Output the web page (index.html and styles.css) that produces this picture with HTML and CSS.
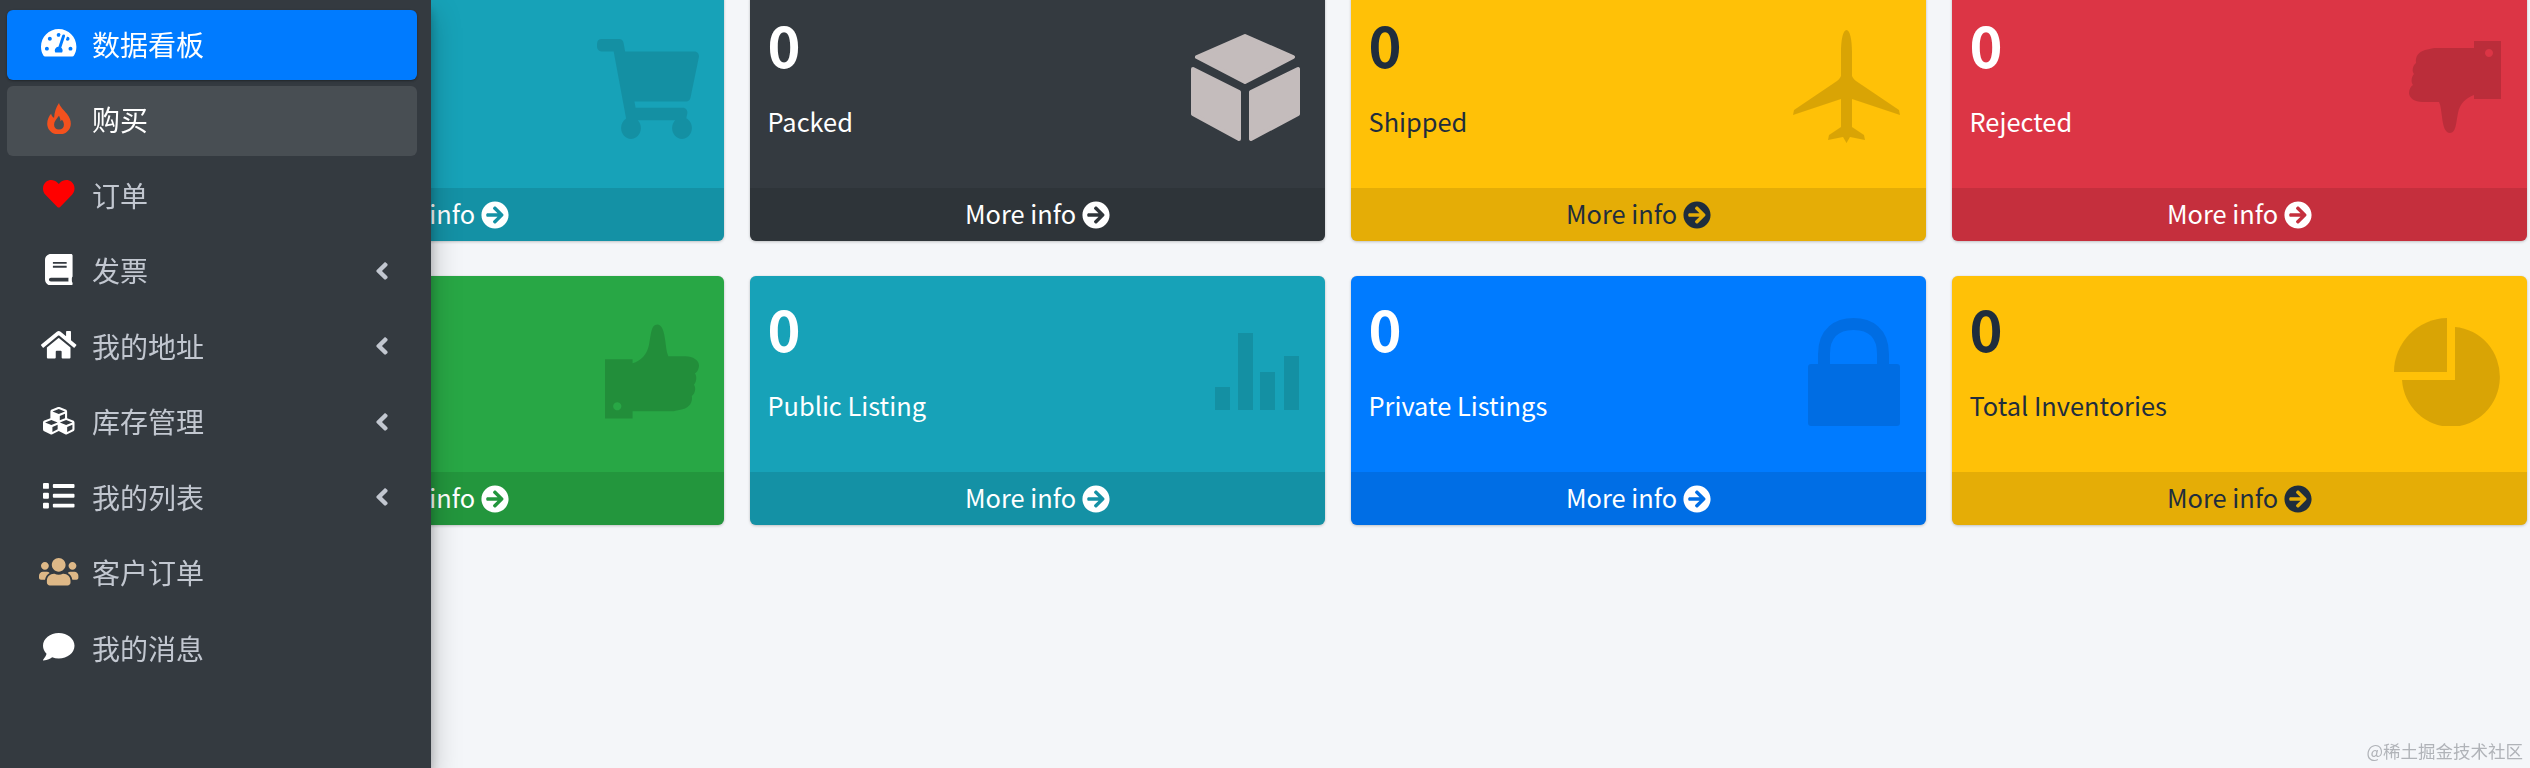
FILE: index.html
```html
<!DOCTYPE html>
<html lang="zh-CN">
<head>
<meta charset="utf-8">
<title>数据看板</title>
<link rel="stylesheet" href="styles.css">
</head>
<body>
<svg class="defs" aria-hidden="true">
  <symbol id="arrow" viewBox="0 0 512 512"><path d="M256 8c137 0 248 111 248 248S393 504 256 504 8 393 8 256 119 8 256 8zm-28.9 143.6l75.5 72.4H120c-13.3 0-24 10.7-24 24v16c0 13.3 10.7 24 24 24h182.6l-75.5 72.4c-9.7 9.3-9.9 24.8-.4 34.3l11 10.9c9.4 9.4 24.6 9.4 33.9 0L404.3 273c9.4-9.4 9.4-24.6 0-33.9L271.6 106.3c-9.4-9.4-24.6-9.4-33.9 0l-11 10.9c-9.5 9.6-9.3 25.1.4 34.4z"/></symbol>
  <symbol id="angle" viewBox="0 0 256 512"><path d="M31.7 239l136-136c9.4-9.4 24.6-9.4 33.9 0l22.6 22.6c9.4 9.4 9.4 24.6 0 33.9L127.9 256l96.4 96.4c9.4 9.4 9.4 24.6 0 33.9L201.7 409c-9.4 9.4-24.6 9.4-33.9 0l-136-136c-9.5-9.4-9.5-24.6-.1-34z"/></symbol>
  <symbol id="thumb" viewBox="0 0 92 92"><path fill-rule="evenodd" d="M65 0H92V58H65V54C57 57 51 62 49 72 47 82 47 92 41 92 36 92 34 85 33 76 32 70 32 65 30 61H13C6 61 0 57 0 52 0 48 2 45 4 44 2 42 2 36 5 33 3 31 3 25 7 22 6 16 9 11 16 9L25 7H65ZM80 8a4 4 0 1 0 .01 0Z"/></symbol>
</svg>

<aside class="sidebar">
  <nav class="nav">
    <a class="nav-link active"><span class="nav-ico"><svg class="ic w576" viewBox="0 0 576 512"><path d="M288 32C128.94 32 0 160.94 0 320c0 52.8 14.25 102.26 39.06 144.8 5.61 9.62 16.3 15.2 27.44 15.2h443c11.14 0 21.83-5.58 27.44-15.2C561.75 422.26 576 372.8 576 320c0-159.06-128.94-288-288-288zm0 64c14.71 0 26.58 10.13 30.32 23.65-1.11 2.26-2.64 4.23-3.45 6.67l-9.22 27.67c-5.13 3.49-10.97 6.01-17.64 6.01-17.67 0-32-14.33-32-32S270.33 96 288 96zM96 384c-17.67 0-32-14.33-32-32s14.33-32 32-32 32 14.33 32 32-14.33 32-32 32zm48-160c-17.67 0-32-14.33-32-32s14.33-32 32-32 32 14.33 32 32-14.33 32-32 32zm246.77-72.41l-61.33 184C343.13 347.33 352 364.54 352 384c0 11.72-3.38 22.55-8.88 32H232.88c-5.5-9.45-8.88-20.28-8.88-32 0-33.94 26.5-61.43 59.9-63.59l61.34-184.01c4.17-12.56 17.73-19.45 30.36-15.17 12.57 4.19 19.35 17.79 15.17 30.36zm14.66 57.2l15.52-46.55c3.47-1.29 7.13-2.23 11.05-2.23 17.67 0 32 14.33 32 32s-14.33 32-32 32c-11.38-.01-20.89-6.28-26.57-15.22zM480 384c-17.67 0-32-14.33-32-32s14.33-32 32-32 32 14.33 32 32-14.33 32-32 32z"/></svg></span><span class="nav-text">数据看板</span></a>
    <a class="nav-link hover"><span class="nav-ico"><svg class="ic wfire fire" viewBox="0 0 24 32"><path fill-rule="evenodd" d="M12 0C13 4 17 7 20 11 23 15 24 18 24 21 24 27.5 18.5 32 12 32 5.5 32 0 27.5 0 21 0 17 2 13 4 11 4.5 13 5.5 14.5 7 15 7.5 9 9 4 12 0ZM12 13C9.5 16.5 7 18.5 7 22 7 25 9 27 12 27 15 27 17 25 17 22 17 20 16 18 15 17L13.5 18.5C13.5 16.5 13 15 12 13Z"/></svg></span><span class="nav-text">购买</span></a>
    <a class="nav-link"><span class="nav-ico"><svg class="ic w512 heart" viewBox="0 0 512 512"><path d="M462.3 62.6C407.5 15.9 326 24.3 275.7 76.2L256 96.5l-19.7-20.3C186.1 24.3 104.5 15.9 49.7 62.6c-62.8 53.6-66.1 149.8-9.9 207.9l193.5 199.8c12.5 12.9 32.8 12.9 45.3 0l193.5-199.8c56.3-58.1 53-154.3-9.8-207.9z"/></svg></span><span class="nav-text">订单</span></a>
    <a class="nav-link"><span class="nav-ico"><svg class="ic w448" viewBox="0 0 448 512"><path d="M448 360V24c0-13.3-10.7-24-24-24H96C43 0 0 43 0 96v320c0 53 43 96 96 96h328c13.3 0 24-10.7 24-24v-16c0-7.5-3.5-14.3-8.9-18.7-4.2-15.4-4.2-59.3 0-74.7 5.4-4.3 8.9-11.1 8.9-18.6zM128 134c0-3.3 2.7-6 6-6h212c3.3 0 6 2.7 6 6v20c0 3.3-2.7 6-6 6H134c-3.3 0-6-2.7-6-6v-20zm0 64c0-3.3 2.7-6 6-6h212c3.3 0 6 2.7 6 6v20c0 3.3-2.7 6-6 6H134c-3.3 0-6-2.7-6-6v-20zm253.4 250H96c-17.7 0-32-14.3-32-32 0-17.6 14.4-32 32-32h285.4c-1.9 17.1-1.9 46.9 0 64z"/></svg></span><span class="nav-text">发票</span><svg class="chev"><use href="#angle"/></svg></a>
    <a class="nav-link"><span class="nav-ico"><svg class="ic w576" viewBox="0 0 576 512"><path d="M280.37 148.26L96 300.11V464a16 16 0 0 0 16 16l112.06-.29a16 16 0 0 0 15.92-16V368a16 16 0 0 1 16-16h64a16 16 0 0 1 16 16v95.64a16 16 0 0 0 16 16.05L464 480a16 16 0 0 0 16-16V300L295.67 148.26a12.19 12.19 0 0 0-15.3 0zM571.6 251.47L488 182.56V44.05a12 12 0 0 0-12-12h-56a12 12 0 0 0-12 12v72.61L318.47 43a48 48 0 0 0-61 0L4.34 251.47a12 12 0 0 0-1.6 16.9l25.5 31A12 12 0 0 0 45.15 301l235.22-193.74a12.19 12.19 0 0 1 15.3 0L530.9 301a12 12 0 0 0 16.9-1.6l25.5-31a12 12 0 0 0-1.7-16.93z"/></svg></span><span class="nav-text">我的地址</span><svg class="chev"><use href="#angle"/></svg></a>
    <a class="nav-link"><span class="nav-ico"><svg class="ic w512" viewBox="0 0 512 512"><path d="M488.6 250.2L392 214V105.5c0-15-9.3-28.4-23.4-33.7l-100-37.5c-8.1-3.1-17.1-3.1-25.3 0l-100 37.5c-14.1 5.3-23.4 18.7-23.4 33.7V214l-96.6 36.2C9.3 255.5 0 268.9 0 283.9V394c0 13.6 7.7 26.1 19.9 32.2l100 50c10.1 5.1 22.1 5.1 32.2 0l103.9-52 103.9 52c10.1 5.1 22.1 5.1 32.2 0l100-50c12.2-6.1 19.9-18.6 19.9-32.2V283.9c0-15-9.3-28.4-23.4-33.7zM358 214.8l-85 31.9v-68.2l85-37v73.3zM154 104.1l102-38.2 102 38.2v.6l-102 41.4-102-41.4v-.6zm84 291.1l-85 42.5v-79.1l85-38.8v75.4zm0-112l-102 41.4-102-41.4v-.6l102-38.2 102 38.2v.6zm240 112l-85 42.5v-79.1l85-38.8v75.4zm0-112l-102 41.4-102-41.4v-.6l102-38.2 102 38.2v.6z"/></svg></span><span class="nav-text">库存管理</span><svg class="chev"><use href="#angle"/></svg></a>
    <a class="nav-link"><span class="nav-ico"><svg class="ic w512" viewBox="0 0 512 512"><path d="M80 368H16a16 16 0 0 0-16 16v64a16 16 0 0 0 16 16h64a16 16 0 0 0 16-16v-64a16 16 0 0 0-16-16zm0-320H16A16 16 0 0 0 0 64v64a16 16 0 0 0 16 16h64a16 16 0 0 0 16-16V64a16 16 0 0 0-16-16zm0 160H16a16 16 0 0 0-16 16v64a16 16 0 0 0 16 16h64a16 16 0 0 0 16-16v-64a16 16 0 0 0-16-16zm416 176H176a16 16 0 0 0-16 16v32a16 16 0 0 0 16 16h320a16 16 0 0 0 16-16v-32a16 16 0 0 0-16-16zm0-320H176a16 16 0 0 0-16 16v32a16 16 0 0 0 16 16h320a16 16 0 0 0 16-16V80a16 16 0 0 0-16-16zm0 160H176a16 16 0 0 0-16 16v32a16 16 0 0 0 16 16h320a16 16 0 0 0 16-16v-32a16 16 0 0 0-16-16z"/></svg></span><span class="nav-text">我的列表</span><svg class="chev"><use href="#angle"/></svg></a>
    <a class="nav-link"><span class="nav-ico"><svg class="ic w640 users" viewBox="0 0 640 512"><path d="M96 224c35.3 0 64-28.7 64-64s-28.7-64-64-64-64 28.7-64 64 28.7 64 64 64zm448 0c35.3 0 64-28.7 64-64s-28.7-64-64-64-64 28.7-64 64 28.7 64 64 64zm32 32h-64c-17.6 0-33.5 7.1-45.1 18.6 40.3 22.1 68.9 62 75.1 109.4h66c17.7 0 32-14.3 32-32v-32c0-35.3-28.7-64-64-64zm-256 0c61.9 0 112-50.1 112-112S381.9 32 320 32 208 82.1 208 144s50.1 112 112 112zm76.8 32h-8.3c-20.8 10-43.9 16-68.5 16s-47.6-6-68.5-16h-8.3C179.6 288 128 339.6 128 403.2V432c0 26.5 21.5 48 48 48h288c26.5 0 48-21.5 48-48v-28.8c0-63.6-51.6-115.2-115.2-115.2zm-223.7-13.4C161.5 263.1 145.6 256 128 256H64c-35.3 0-64 28.7-64 64v32c0 17.7 14.3 32 32 32h65.9c6.3-47.4 34.9-87.3 75.2-109.4z"/></svg></span><span class="nav-text">客户订单</span></a>
    <a class="nav-link"><span class="nav-ico"><svg class="ic w512" viewBox="0 0 512 512"><path d="M256 32C114.6 32 0 125.1 0 240c0 49.6 21.4 95 57 130.7C44.5 421.1 2.7 466 2.2 466.5c-2.2 2.3-2.8 5.7-1.5 8.7S4.8 480 8 480c66.3 0 116-31.8 140.6-51.4 32.7 12.3 69 19.4 107.4 19.4 141.4 0 256-93.1 256-208S397.4 32 256 32z"/></svg></span><span class="nav-text">我的消息</span></a>
  </nav>
</aside>

<main class="grid">
  <section class="card info">
    <div class="body"></div>
    <svg class="bg soft cart" viewBox="0 0 576 512" preserveAspectRatio="none"><path d="M528.12 301.319l47.273-208C578.806 78.301 567.391 64 551.99 64H159.208l-9.166-44.81C147.758 8.021 137.93 0 126.529 0H24C10.745 0 0 10.745 0 24v16c0 13.255 10.745 24 24 24h69.883l70.248 343.435C147.325 417.1 136 435.222 136 456c0 30.928 25.072 56 56 56s56-25.072 56-56c0-15.674-6.447-29.835-16.824-40h209.647C430.447 426.165 424 440.326 424 456c0 30.928 25.072 56 56 56s56-25.072 56-56c0-22.172-12.888-41.332-31.579-50.405l5.517-24.276c3.413-15.018-8.002-29.319-23.403-29.319H218.117l-6.545-32h293.145c11.206 0 20.92-7.754 23.403-18.681z"/></svg>
    <a class="foot"><span class="foot-text">More info</span><svg class="arrow"><use href="#arrow"/></svg></a>
  </section>
  <section class="card dark">
    <div class="body"><h3>0</h3><p>Packed</p></div>
    <svg class="bg cube" viewBox="0 0 109 109"><g class="cube-faces"><path d="M54 3L102 24 54 49 6 24Z"/><path d="M2 36L48 59V106L2 81Z"/><path d="M60 59L107 36V81L60 106Z"/></g></svg>
    <a class="foot"><span class="foot-text">More info</span><svg class="arrow"><use href="#arrow"/></svg></a>
  </section>
  <section class="card warning">
    <div class="body"><h3>0</h3><p>Shipped</p></div>
    <svg class="bg plane" viewBox="0 0 107 113"><path d="M53.5 0C57 0 59 10 59 22V46C60 49 63 51 66 53L106 80 107 85 59 69V97L71 105 72 110 57 107 53.5 113 50 107 35 110 36 105 48 97V69L0 85 1 80 41 53C44 51 47 49 48 46V22C48 10 50 0 53.5 0Z"/></svg>
    <a class="foot"><span class="foot-text">More info</span><svg class="arrow"><use href="#arrow"/></svg></a>
  </section>
  <section class="card danger">
    <div class="body"><h3>0</h3><p>Rejected</p></div>
    <svg class="bg thumb-down"><use href="#thumb"/></svg>
    <a class="foot"><span class="foot-text">More info</span><svg class="arrow"><use href="#arrow"/></svg></a>
  </section>
  <section class="card success">
    <div class="body"></div>
    <svg class="bg thumb-up"><use href="#thumb"/></svg>
    <a class="foot"><span class="foot-text">More info</span><svg class="arrow"><use href="#arrow"/></svg></a>
  </section>
  <section class="card info">
    <div class="body"><h3>0</h3><p>Public Listing</p></div>
    <svg class="bg soft bars" viewBox="0 0 84 77"><rect x="0" y="54" width="15" height="23"/><rect x="23" y="0" width="15" height="77"/><rect x="45" y="39" width="15" height="38"/><rect x="69" y="23" width="15" height="54"/></svg>
    <a class="foot"><span class="foot-text">More info</span><svg class="arrow"><use href="#arrow"/></svg></a>
  </section>
  <section class="card primary">
    <div class="body"><h3>0</h3><p>Private Listings</p></div>
    <svg class="bg soft lock" viewBox="0 0 92 108"><path d="M0 49a3 3 0 0 1 3-3H89a3 3 0 0 1 3 3V105a3 3 0 0 1-3 3H3a3 3 0 0 1-3-3Z"/><path class="shackle" d="M16 46V36C16 14 30 6 45.5 6S75 14 75 36V46"/></svg>
    <a class="foot"><span class="foot-text">More info</span><svg class="arrow"><use href="#arrow"/></svg></a>
  </section>
  <section class="card warning">
    <div class="body"><h3>0</h3><p>Total Inventories</p></div>
    <svg class="bg pie" viewBox="0 0 107 108"><path d="M61 9A49 50 0 1 1 8 62H61Z"/><path d="M53 0V54H0A54 54 0 0 1 53 0Z"/></svg>
    <a class="foot"><span class="foot-text">More info</span><svg class="arrow"><use href="#arrow"/></svg></a>
  </section>
</main>

<div class="watermark">@稀土掘金技术社区</div>
</body>
</html>
```

FILE: styles.css
```css
* { box-sizing: border-box; }
html, body { height: 100%; }
body {
  margin: 0;
  height: 768px;
  overflow: hidden;
  background: #f4f6f9;
  font-family: "Noto Sans CJK SC", "Noto Sans", sans-serif;
  font-size: 28px;
  line-height: 42px;
  color: #212529;
}
.defs { display: none; }

/* sidebar overlays the page */
.sidebar {
  position: fixed;
  left: 0;
  top: 0;
  bottom: 0;
  width: 431px;
  z-index: 10;
  background: #343a40;
  box-shadow: 0 14px 28px rgba(0,0,0,.25), 0 10px 10px rgba(0,0,0,.22);
}
.nav {
  display: flex;
  flex-direction: column;
  gap: 5.5px;
  padding: 10px 14px 0 7px;
}
.nav-link {
  display: flex;
  align-items: center;
  height: 70px;
  padding: 0 28px 0 27px;
  border-radius: 6px;
  color: #c2c7d0;
}
.nav-link.active {
  background: #007bff;
  color: #fff;
  box-shadow: 0 1px 3px rgba(0,0,0,.12), 0 1px 2px rgba(0,0,0,.24);
}
.nav-link.hover {
  background: rgba(255,255,255,.1);
  color: #fff;
}
.nav-ico {
  display: flex;
  justify-content: center;
  flex: none;
  width: 50px;
  margin-right: 8px;
  margin-bottom: 4px;
}
.nav-text { margin-bottom: 3px; }
.ic { display: block; height: 31.5px; fill: #fff; }
.w512 { width: 31.5px; }
.w576 { width: 35.4px; }
.w448 { width: 27.6px; }
.w640 { width: 39.4px; }
.wfire { width: 24px; }
.fire { fill: #f4511e; }
.heart { fill: #ff0000; }
.users { fill: #deb887; }
.chev {
  width: 14px;
  height: 28px;
  margin-left: auto;
  margin-bottom: 2px;
  fill: #c2c7d0;
}

/* card grid */
.grid {
  display: grid;
  grid-template-columns: repeat(4, 1fr);
  column-gap: 26px;
  row-gap: 35px;
  margin-top: -8px;
  padding: 0 3px 0 149px;
}
.card {
  position: relative;
  display: flex;
  flex-direction: column;
  border-radius: 6px;
  overflow: hidden;
  box-shadow: 0 0 1px rgba(0,0,0,.125), 0 1px 3px rgba(0,0,0,.2);
  color: #fff;
  font-size: 25.4px;
}
.body { flex: 1; padding: 17.5px; min-height: 196px; }
h3 {
  margin: 0 0 23px;
  font-size: 56px;
  line-height: 67px;
  font-weight: 700;
}
p { margin: 0 0 29px; }
.foot {
  display: flex;
  align-items: center;
  justify-content: center;
  gap: 6px;
  height: 53px;
  background: rgba(0,0,0,.1);
  color: inherit;
}
.foot-text { margin-bottom: 3px; }
.arrow {
  width: 28px;
  height: 28px;
  fill: currentColor;
}
.info { background: #17a2b8; }
.dark { background: #343a40; }
.warning { background: #ffc107; color: #1f2d3d; }
.danger { background: #dc3545; }
.success { background: #28a745; }
.primary { background: #007bff; }

/* faint illustration in the card corner */
.bg {
  position: absolute;
  fill: rgba(0,0,0,.15);
}
.bg.soft { fill: rgba(0,0,0,.11); }
.cart { top: 47px; right: 25px; width: 102px; height: 100px; }
.cube { top: 41px; right: 25px; width: 109px; height: 109px; }
.cube-faces { fill: #c4bcbc; stroke: #c4bcbc; stroke-width: 4px; stroke-linejoin: round; }
.plane { top: 38px; right: 26px; width: 107px; height: 113px; }
.thumb-down { top: 49px; right: 26px; width: 92px; height: 92px; }
.thumb-up { top: 47px; right: 25px; width: 94px; height: 97px; transform: rotate(180deg); }
.bars { top: 57px; right: 26px; width: 84px; height: 77px; }
.lock { top: 42px; right: 26px; width: 92px; height: 108px; }
.shackle { fill: none; stroke: rgba(0,0,0,.11); stroke-width: 12px; }
.pie { top: 42px; right: 26px; width: 107px; height: 108px; }

.watermark {
  position: fixed;
  right: 7px;
  bottom: 6px;
  font-size: 17.5px;
  line-height: 22px;
  color: #b0b3b8;
}
```
